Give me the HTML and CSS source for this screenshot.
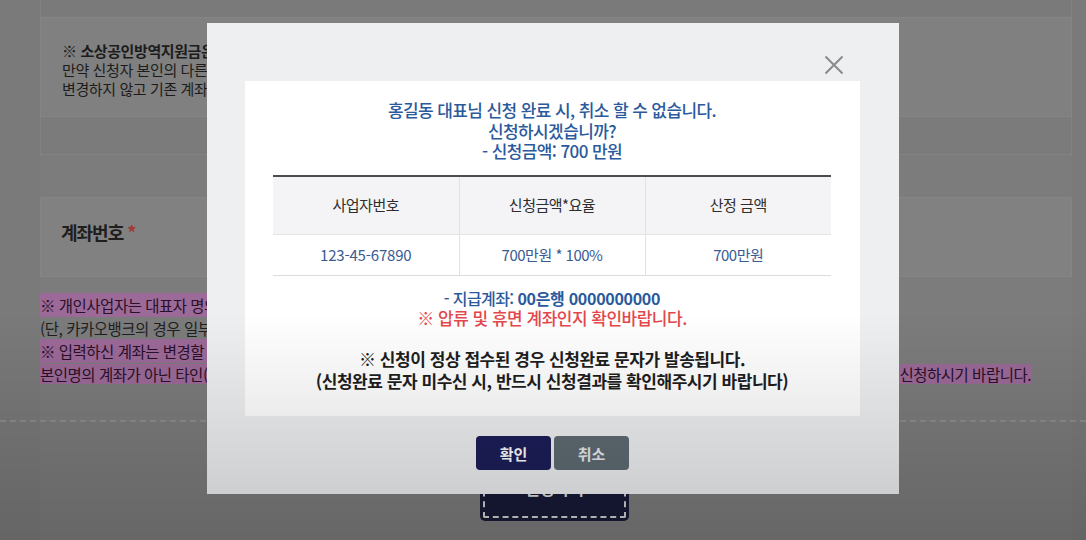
FILE: index.html
```html
<!DOCTYPE html>
<html lang="ko">
<head>
<meta charset="utf-8">
<title>신청 확인</title>
<link rel="stylesheet" href="styles.css">
</head>
<body>
<div class="page">
  <div class="top-strip"></div>
  <section class="notice-box">
    <p class="strong">※ 소상공인방역지원금은 신청자 본인 명의의 계좌로만 지급됩니다.</p>
    <p>만약 신청자 본인의 다른 계좌로 지급받기를 원하시는 경우</p>
    <p>변경하지 않고 기존 계좌로 신청하시기 바랍니다.</p>
  </section>
  <div class="strip"></div>
  <section class="account-row">
    <span class="label">계좌번호 <em>*</em></span>
  </section>
  <div class="notes">
    <p><mark>※ 개인사업자는 대표자 명의의 계좌만 입력 가능합니다.</mark></p>
    <p>(단, 카카오뱅크의 경우 일부 계좌는 확인이 어려울 수 있습니다.)</p>
    <p><mark>※ 입력하신 계좌는 변경할 수 없으니 정확히 입력하시기 바랍니다.</mark></p>
    <p><mark class="wide"><span>본인명의 계좌가 아닌 타인(가족 포함) 명의 계좌 입력 시 지급이 불가하니 확인 후</span><span>신청하시기 바랍니다.</span></mark></p>
  </div>
  <div class="divider"></div>
  <div class="submit-wrap"><button class="submit" type="button">신청하기</button></div>
</div>

<div class="modal">
  <svg class="close" width="20" height="20" viewBox="0 0 20 20" aria-label="닫기">
    <path d="M1.5 1.5 L18.5 18.5 M18.5 1.5 L1.5 18.5" stroke="#8a8a8a" stroke-width="2" fill="none"/>
  </svg>
  <div class="modal-body">
    <p class="title">홍길동 대표님 신청 완료 시, 취소 할 수 없습니다.<br>신청하시겠습니까?<br>- 신청금액: 700 만원</p>
    <table class="summary">
      <thead>
        <tr><th>사업자번호</th><th>신청금액*요율</th><th>산정 금액</th></tr>
      </thead>
      <tbody>
        <tr><td>123-45-67890</td><td>700만원 * 100%</td><td>700만원</td></tr>
      </tbody>
    </table>
    <p class="account">- 지급계좌: <b>00은행 0000000000</b></p>
    <p class="warn">※ 압류 및 휴면 계좌인지 확인바랍니다.</p>
    <p class="sms">※ 신청이 정상 접수된 경우 신청완료 문자가 발송됩니다.<br>(신청완료 문자 미수신 시, 반드시 신청결과를 확인해주시기 바랍니다)</p>
  </div>
  <div class="btns">
    <button class="btn ok" type="button">확인</button>
    <button class="btn cancel" type="button">취소</button>
  </div>
</div>

<div class="vignette"></div>
</body>
</html>
```

FILE: styles.css
```css
html, body {
  margin: 0;
  padding: 0;
}
body {
  width: 1086px;
  height: 540px;
  overflow: hidden;
  background: #7a7a7a;
  font-family: "Noto Sans CJK KR", "Noto Sans", sans-serif;
  color: #1f1f1f;
}
p { margin: 0; }

.page {
  margin-left: 40px;
  width: 1032px;
  background: #7c7c7c;
  min-height: 540px;
}
.top-strip {
  height: 17px;
  background: #7a7a7a;
  border-left: 1px solid #828282;
  border-right: 1px solid #828282;
  box-sizing: border-box;
}
.notice-box {
  height: 100px;
  box-sizing: border-box;
  background: #808080;
  border: 1px solid #858585;
  padding: 23px 0 0 21px;
  font-size: 15px;
  line-height: 19px;
  letter-spacing: -0.4px;
  color: #1c1c1c;
  white-space: nowrap;
}
.notice-box .strong { font-weight: 700; }
.strip {
  height: 38px;
  box-sizing: border-box;
  background: #7b7b7b;
  border: 1px solid #838383;
  border-top: 0;
}
.account-row {
  margin-top: 42px;
  height: 80px;
  box-sizing: border-box;
  background: #818181;
  border: 1px solid #868686;
  display: flex;
  align-items: center;
  padding: 0 0 10px 20px;
}
.account-row .label {
  font-size: 18px;
  font-weight: 700;
  letter-spacing: -1px;
  color: #1e1e1e;
}
.account-row em {
  font-style: normal;
  color: #a03a3a;
  font-weight: 700;
}
.notes {
  margin-top: 17px;
  font-size: 15.5px;
  line-height: 23px;
  letter-spacing: -0.5px;
  color: #1f1f1f;
  white-space: nowrap;
}
.notes mark {
  background: #9c6a98;
  color: #2a1028;
  padding: 1px 0;
}
.notes mark.wide {
  display: inline-flex;
  justify-content: space-between;
  width: 991px;
  line-height: 18px;
}
.divider {
  margin-top: 34px;
  margin-left: -40px;
  width: 1086px;
  border-top: 2px dashed #8c8c8c;
}
.submit-wrap {
  margin-top: 33px;
  display: flex;
  justify-content: center;
  padding-right: 3px;
}
.submit {
  width: 149px;
  height: 66px;
  border: 0;
  border-radius: 5px;
  background: #171a36;
  color: #ddd;
  font: 700 16px "Noto Sans CJK KR", sans-serif;
  outline: 2px dashed #cfcfcf;
  outline-offset: -5px;
}

.modal {
  position: fixed;
  left: 207px;
  top: 23px;
  width: 692px;
  height: 471px;
  box-sizing: border-box;
  background: #eeeff1;
  padding: 58px 39px 0 38px;
}
.close {
  position: absolute;
  left: 617px;
  top: 32px;
}
.modal-body {
  height: 335px;
  box-sizing: border-box;
  background: #fff;
  padding: 19px 29px 0 28px;
  text-align: center;
}
.title {
  color: #2b5a9c;
  font-size: 17px;
  line-height: 20.5px;
  font-weight: 500;
  letter-spacing: -0.6px;
}
.summary {
  margin-top: 13px;
  width: 558px;
  border-collapse: collapse;
  table-layout: fixed;
  border-top: 2px solid #4c4c50;
  font-size: 15px;
  letter-spacing: -0.5px;
}
.summary th {
  height: 55px;
  padding: 0 0 2px;
  background: #f4f4f6;
  font-weight: 400;
  color: #2e2e2e;
  border-left: 1px solid #e2e2e2;
  border-bottom: 1px solid #e4e4e4;
}
.summary td {
  height: 40px;
  padding: 0;
  color: #3a5a94;
  font-weight: 400;
  border-left: 1px solid #e2e2e2;
  border-bottom: 1px solid #dcdcdc;
}
.summary td:first-child { letter-spacing: -0.2px; }
.summary th:first-child, .summary td:first-child { border-left: 0; }
.account {
  margin-top: 12px;
  color: #2b5a9c;
  font-size: 16px;
  line-height: 20px;
  font-weight: 500;
  letter-spacing: -0.6px;
}
.account b { font-weight: 700; letter-spacing: -0.3px; }
.warn {
  color: #e4474b;
  font-size: 17px;
  line-height: 20px;
  font-weight: 500;
  letter-spacing: -0.5px;
}
.sms {
  margin-top: 20px;
  color: #1e1e1e;
  font-size: 17px;
  line-height: 22px;
  font-weight: 700;
  letter-spacing: -0.45px;
}
.btns {
  margin-top: 20px;
  display: flex;
  justify-content: center;
  gap: 3px;
}
.btn {
  width: 75px;
  height: 34px;
  border: 0;
  border-radius: 4px;
  color: #fff;
  font: 700 15px "Noto Sans CJK KR", sans-serif;
  padding: 0;
}
.btn.ok { background: #1c1d57; }
.btn.cancel { background: #5e6a72; color: #e8eaec; }

.vignette {
  position: fixed;
  left: 0;
  top: 0;
  width: 1086px;
  height: 540px;
  pointer-events: none;
  background: linear-gradient(to bottom, rgba(0,0,0,0) 0%, rgba(0,0,0,0) 58%, rgba(0,0,0,0.17) 100%);
}
```
